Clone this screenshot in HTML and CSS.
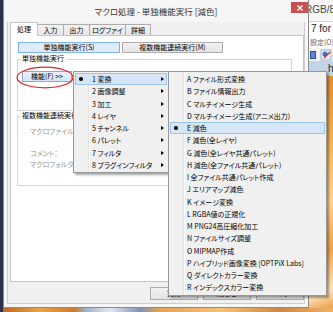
FILE: index.html
```html
<!DOCTYPE html>
<html lang="ja">
<head>
    <meta charset="UTF-8">
    <meta name="viewport" content="width=device-width, initial-scale=1.0">
    <title>マクロ処理 - 単独機能実行 [減色]</title>
    <link rel="stylesheet" href="styles.css">
</head>
<body>
    <div class="screen">
        <div class="top">
            <div class="edge"></div>
            <div class="window">
                <div class="titlebar">
                    <div class="title">マクロ処理 - 単独機能実行 [減色]</div>
                    <div class="close">
                        <svg width="6" height="6" viewBox="0 0 6 6"><path d="M0.5 0.5L5.5 5.5M5.5 0.5L0.5 5.5" stroke="#fff" stroke-width="1.3"/></svg>
                    </div>
                </div>
                <div class="client">
                    <div class="tabs">
                        <div class="tab active">処理</div>
                        <div class="tab w26">入力</div>
                        <div class="tab w26">出力</div>
                        <div class="tab w36">ログファイル</div>
                        <div class="tab w25">詳細</div>
                    </div>
                    <div class="panel">
                        <div class="modes">
                            <button class="mode on">単独機能実行(S)</button>
                            <button class="mode">複数機能連続実行(M)</button>
                        </div>
                        <div class="group g1">
                            <span class="legend">単独機能実行</span>
                            <button class="func">機能(F) &gt;&gt;</button>
                        </div>
                        <div class="group g2">
                            <span class="legend">複数機能連続実行</span>
                            <div class="field f1">マクロファイル(F)</div>
                            <div class="field f2">コメント：</div>
                            <div class="field f3">マクロフォルダ：</div>
                        </div>
                    </div>
                    <div class="footer">
                        <button class="btn">実行</button>
                        <button class="btn">閉じる</button>
                        <button class="btn">ヘルプ</button>
                    </div>
                </div>
            </div>
            <div class="behind">
                <div class="app-title"><span>RGB/8</span></div>
                <div class="app-line">7 for</div>
                <div class="app-menu">設定(O)</div>
                <div class="app-tools">
                    <svg width="24" height="12" viewBox="0 0 24 12">
                        <rect x="0" y="2" width="6" height="8" fill="#2b4f9a"/>
                        <rect x="1" y="3" width="4" height="6" fill="#5f86d0"/>
                        <rect x="11" y="1" width="10" height="10" fill="#e8eef6" stroke="#8aa0c0" stroke-width="0.8"/>
                        <circle cx="15" cy="5" r="2.5" fill="#3d6fc4"/>
                        <path d="M14 9L20 3" stroke="#d42a2a" stroke-width="1.4"/>
                    </svg>
                </div>
                <div class="app-band">h</div>
                <div class="app-pic"></div>
            </div>
        </div>
        <div class="strip"></div>
    </div>

    <svg class="mark" width="60" height="24" viewBox="0 0 60 24">
        <ellipse cx="29" cy="11.5" rx="28" ry="10.3" fill="none" stroke="#e2231f" stroke-width="1.2"/>
    </svg>

    <div class="menu main">
        <div class="item hot"><span class="check"><i></i></span><span class="label">1 変換</span><span class="arrow"></span></div>
        <div class="item"><span class="check"></span><span class="label">2 画像調整</span><span class="arrow"></span></div>
        <div class="item"><span class="check"></span><span class="label">3 加工</span><span class="arrow"></span></div>
        <div class="item"><span class="check"></span><span class="label">4 レイヤ</span><span class="arrow"></span></div>
        <div class="item"><span class="check"></span><span class="label">5 チャンネル</span><span class="arrow"></span></div>
        <div class="item"><span class="check"></span><span class="label">6 パレット</span><span class="arrow"></span></div>
        <div class="item"><span class="check"></span><span class="label">7 フィルタ</span><span class="arrow"></span></div>
        <div class="item"><span class="check"></span><span class="label">8 プラグインフィルタ</span><span class="arrow"></span></div>
    </div>

    <div class="menu sub">
        <div class="item"><span class="check"></span><span class="label">A ファイル形式変換</span></div>
        <div class="item"><span class="check"></span><span class="label">B ファイル情報出力</span></div>
        <div class="item"><span class="check"></span><span class="label">C マルチイメージ生成</span></div>
        <div class="item"><span class="check"></span><span class="label">D マルチイメージ生成(アニメ出力)</span></div>
        <div class="item hot"><span class="check"><i></i></span><span class="label">E 減色</span></div>
        <div class="item"><span class="check"></span><span class="label">F 減色(全レイヤ)</span></div>
        <div class="item"><span class="check"></span><span class="label">G 減色(全レイヤ共通パレット)</span></div>
        <div class="item"><span class="check"></span><span class="label">H 減色(全ファイル共通パレット)</span></div>
        <div class="item"><span class="check"></span><span class="label">I 全ファイル共通パレット作成</span></div>
        <div class="item"><span class="check"></span><span class="label">J エリアマップ減色</span></div>
        <div class="item"><span class="check"></span><span class="label">K イメージ変換</span></div>
        <div class="item"><span class="check"></span><span class="label">L RGBA値の正規化</span></div>
        <div class="item"><span class="check"></span><span class="label">M PNG24高圧縮化加工</span></div>
        <div class="item"><span class="check"></span><span class="label">N ファイルサイズ調整</span></div>
        <div class="item"><span class="check"></span><span class="label">O MIPMAP作成</span></div>
        <div class="item"><span class="check"></span><span class="label">P ハイブリッド画像変換 [OPTPiX Labs]</span></div>
        <div class="item"><span class="check"></span><span class="label">Q ダイレクトカラー変換</span></div>
        <div class="item"><span class="check"></span><span class="label">R インデックスカラー変換</span></div>
    </div>
</body>
</html>
```

FILE: styles.css
```css
* {
    margin: 0;
    padding: 0;
    box-sizing: border-box;
}

body {
    width: 333px;
    height: 312px;
    overflow: hidden;
    position: relative;
    font-family: "Noto Sans CJK JP", "Noto Sans", sans-serif;
    font-feature-settings: "palt";
    font-size: 7px;
    color: #000;
    background: #2c3050;
}

button {
    font: inherit;
    color: inherit;
}

.screen {
    display: grid;
    grid-template-rows: 308px 4px;
    height: 312px;
}

.top {
    display: flex;
}

.edge {
    width: 3px;
    background: #2c3050;
}

/* dialog window */
.window {
    width: 306px;
    display: flex;
    flex-direction: column;
    background: #f6f6f6;
    border: 1px solid #8b8b8b;
    border-top: none;
}

.titlebar {
    height: 22px;
    display: flex;
    padding-left: 17px;
}

.title {
    flex: 1;
    text-align: center;
    font-size: 8.5px;
    line-height: 22px;
    color: #333;
}

.close {
    width: 17px;
    height: 11px;
    margin-top: 2px;
    background: #c75050;
    display: flex;
    align-items: center;
    justify-content: center;
}

.client {
    flex: 1;
    margin: 0 3px 3px;
    background: #f0f0f0;
    border: 1px solid #cdcdcd;
    border-top: none;
    padding-left: 2px;
    display: flex;
    flex-direction: column;
}

.tabs {
    height: 13px;
    display: flex;
    align-items: flex-end;
}

.tab {
    height: 11px;
    margin-left: -1px;
    border: 1px solid #acacac;
    border-bottom: none;
    background: linear-gradient(#f3f3f3, #e6e6e6);
    text-align: center;
    line-height: 10px;
}

.tab.active {
    width: 28px;
    height: 14px;
    margin: 0 0 -1px 0;
    background: #fff;
    border-color: #c5c5c5;
    position: relative;
    z-index: 1;
    line-height: 12px;
}

.w26 { width: 27px; }
.w36 { width: 37px; }
.w25 { width: 26px; }

.panel {
    height: 247px;
    background: #fff;
    border: 1px solid #c5c5c5;
}

.modes {
    display: flex;
    gap: 2px;
    margin-top: 6px;
    padding-left: 7px;
}

.mode {
    width: 101px;
    height: 11px;
    line-height: 9px;
    border: 1px solid #acacac;
    background: linear-gradient(#f2f2f2, #e4e4e4);
}

.mode.on {
    width: 102px;
    border-color: #7eb4ea;
    background: #dcecfc;
}

.group {
    width: 275px;
    margin-left: 6px;
    border: 1px solid #d5d5d5;
}

.g1 {
    height: 52px;
    margin-top: 6px;
}

.g2 {
    height: 70px;
    margin-top: 5px;
}

.legend {
    display: block;
    width: max-content;
    margin: -6px 0 0 2px;
    padding: 0 2px;
    background: #fff;
    line-height: 9px;
}

.func {
    display: block;
    width: 50px;
    height: 11px;
    margin: 8px 0 0 4px;
    line-height: 9px;
    border: 1px solid #86abd6;
    background: linear-gradient(#e8f1fb, #d6e5f5);
}

.field {
    padding-left: 12px;
    line-height: 9px;
    color: #959595;
}

.f1 { margin-top: 7px; }
.f2 { margin-top: 13px; }
.f3 { margin-top: 2px; }

.footer {
    display: flex;
    justify-content: flex-end;
    gap: 5px;
    margin-top: 5px;
}

.btn {
    width: 48px;
    height: 13px;
    line-height: 11px;
    border: 1px solid #acacac;
    background: linear-gradient(#f2f2f2, #e4e4e4);
}

/* application behind the dialog */
.behind {
    flex: 1;
    display: flex;
    flex-direction: column;
    overflow: hidden;
    background: #fff;
}

.app-title {
    height: 22px;
    line-height: 20px;
    font-family: "Liberation Sans", sans-serif;
    font-size: 10px;
    color: #444;
    white-space: nowrap;
    background: #f7f7f7;
    border-bottom: 1px solid #d6d6d6;
}

.app-title span {
    margin-left: -4px;
}

.app-line {
    height: 14px;
    line-height: 14px;
    padding-left: 2px;
    font-family: "Liberation Sans", sans-serif;
    font-size: 10px;
    color: #222;
    white-space: nowrap;
}

.app-menu {
    height: 12px;
    line-height: 12px;
    padding-left: 1px;
    color: #666;
    white-space: nowrap;
}

.app-tools {
    height: 13px;
    padding: 1px 0 0 1px;
    background: #f3f3f3;
}

.app-band {
    height: 15px;
    line-height: 15px;
    padding-left: 19px;
    font-family: "Liberation Sans", sans-serif;
    font-size: 10px;
    color: #223;
    background: #c2d4e9;
}

.app-pic {
    flex: 1;
    background: linear-gradient(160deg, #e48a2c 0%, #f5b450 30%, #fbd58f 55%, #f3a548 75%, #fce4bd 92%, #e99a40 100%);
}

.strip {
    background: linear-gradient(to right, #30344f 0 3px, #b8692a 3px, #eba24b 40px, #cf7a2e 75px, #9cb1c9 85px, #e2e9f0 110px, #7d93b5 140px, #e3a354 160px, #f4c27a 220px, #c98a45 280px, #f3b064 333px);
}

/* red annotation ring */
.mark {
    position: absolute;
    left: 16px;
    top: 66px;
}

/* popup menus */
.menu {
    position: absolute;
    top: 71px;
    padding: 1px 0;
    border: 1px solid #979797;
    box-shadow: 2px 2px 2px rgba(0, 0, 0, 0.35);
    background: linear-gradient(to right, #f0f0f0 14px, #e2e3e3 14px 15px, #fff 15px 16px, #f0f0f0 16px);
}

.main {
    left: 73px;
    width: 96px;
}

.sub {
    left: 168px;
    width: 159px;
}

.item {
    height: 12.25px;
    display: flex;
    align-items: center;
    margin: 0 1px;
    white-space: nowrap;
}

.item.hot {
    background: #d5e6f6;
    box-shadow: inset 0 0 0 1px #9ec6ea;
}

.check {
    width: 12px;
    display: flex;
    justify-content: center;
}

.check i {
    width: 3.5px;
    height: 3.5px;
    border-radius: 50%;
    background: #000;
}

.label {
    flex: 1;
    padding-left: 5px;
    line-height: 10px;
}

.arrow {
    width: 0;
    height: 0;
    margin-right: 3px;
    border-left: 3px solid #000;
    border-top: 2.5px solid transparent;
    border-bottom: 2.5px solid transparent;
}
```
